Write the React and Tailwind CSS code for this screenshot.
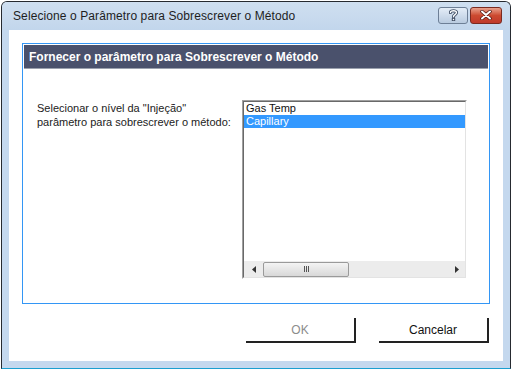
export default function App() {
  return (
    <div className="w-[512px] h-[370px] bg-white overflow-hidden" style={{ fontFamily: '"Liberation Sans", Arial, sans-serif' }}>
      {/* window frame */}
      <div className="ml-[1px] mt-[1px] w-[510px] h-[368px] border border-[#262a30] border-b-[#1b9fd0] rounded-t-[6px] bg-[#c4d8ee] flex flex-col">
        {/* title bar */}
        <div className="h-[28px] flex items-center pl-[11px] pr-[8px] bg-gradient-to-b from-[#cfdff0] to-[#c2d6ec] rounded-t-[5px]">
          <span className="text-[12px] text-[#1e1e1e] leading-none tracking-[0.1px]">Selecione o Parâmetro para Sobrescrever o Método</span>
          <div className="ml-auto flex gap-[2px] mt-[-2px]">
            <div className="w-[30px] h-[17px] rounded-[3px] border border-[#6d7f96] bg-gradient-to-b from-[#e4edf7] to-[#b9cbe0] flex items-center justify-center">
              <svg width="9" height="12" viewBox="0 0 9 12">
                <path d="M1.5 3.5 C1.5 1.2 7.5 1.2 7.5 3.6 C7.5 5.6 4.5 5.6 4.5 7.8" fill="none" stroke="#3f4d63" strokeWidth="3.2" strokeLinecap="round" />
                <rect x="2.8" y="9" width="3.4" height="3" fill="#3f4d63" />
                <path d="M1.5 3.5 C1.5 1.2 7.5 1.2 7.5 3.6 C7.5 5.6 4.5 5.6 4.5 7.8" fill="none" stroke="#ffffff" strokeWidth="1.4" strokeLinecap="round" />
                <rect x="3.8" y="9.8" width="1.4" height="1.4" fill="#ffffff" />
              </svg>
            </div>
            <div className="w-[32px] h-[17px] rounded-[3px] border border-[#7a2a20] bg-gradient-to-b from-[#e8a08c] via-[#cc4a30] to-[#c0392b] flex items-center justify-center">
              <svg width="12" height="10" viewBox="0 0 12 10">
                <path d="M2 1.5 L10 8.5 M10 1.5 L2 8.5" stroke="#4a1510" strokeWidth="3.4" strokeLinecap="round" />
                <path d="M2 1.5 L10 8.5 M10 1.5 L2 8.5" stroke="#ffffff" strokeWidth="2" strokeLinecap="round" />
              </svg>
            </div>
          </div>
        </div>

        {/* client area */}
        <div className="mx-[7px] h-[331px] bg-white flex flex-col px-[13px] pt-[13px]">
          {/* group panel */}
          <div className="h-[261px] border border-[#3396f5] p-[1px] flex flex-col">
            <div className="h-[24px] bg-[#4a516c] border-b border-[#9aa0ad] flex items-center pl-[5px]">
              <span className="text-[12px] font-bold text-white leading-none">Fornecer o parâmetro para Sobrescrever o Método</span>
            </div>
            <div className="flex pt-[31px] pl-[13px]">
              <div className="w-[205px] pt-[1px] text-[11px] leading-[14px] text-[#222]">
                <div>Selecionar o nível da "Injeção"</div>
                <div>parâmetro para sobrescrever o método:</div>
              </div>
              {/* listbox */}
              <div className="w-[225px] h-[179px] border border-[#a0a0a0] border-r-white border-b-white flex flex-col">
                <div className="flex-1 border border-[#696969] border-r-[#e3e3e3] border-b-[#e3e3e3] flex flex-col">
                  <div className="flex-1 text-[11px] leading-[13px]">
                    <div className="pl-[2px] text-[#111]">Gas Temp</div>
                    <div className="pl-[2px] bg-[#3399ff] text-white">Capillary</div>
                  </div>
                  {/* horizontal scrollbar */}
                  <div className="h-[16px] bg-[#ececec] flex items-center">
                    <div className="w-[19px] flex items-center justify-center">
                      <svg width="4" height="7" viewBox="0 0 4 7"><path d="M4 0 L0 3.5 L4 7 Z" fill="#333" /></svg>
                    </div>
                    <div className="w-[86px] h-[15px] rounded-[2px] border border-[#9a9a9a] bg-gradient-to-b from-[#f4f4f4] to-[#d8d8d8] flex items-center justify-center gap-[1px]">
                      <div className="w-[1px] h-[6px] bg-[#555]" />
                      <div className="w-[1px] h-[6px] bg-[#555]" />
                      <div className="w-[1px] h-[6px] bg-[#555]" />
                    </div>
                    <div className="ml-auto w-[17px] flex items-center justify-center">
                      <svg width="4" height="7" viewBox="0 0 4 7"><path d="M0 0 L4 3.5 L0 7 Z" fill="#333" /></svg>
                    </div>
                  </div>
                </div>
              </div>
            </div>
          </div>

          {/* buttons */}
          <div className="flex justify-end gap-[23px] pr-[1px] mt-[14px]">
            <div className="w-[110px] h-[25px] border-r-2 border-b-2 border-[#222] flex items-center justify-center text-[12px] text-[#8c8c8c]">OK</div>
            <div className="w-[110px] h-[25px] border-r-2 border-b-2 border-[#222] flex items-center justify-center text-[12px] text-[#111]">Cancelar</div>
          </div>
        </div>
      </div>
    </div>
  );
}
